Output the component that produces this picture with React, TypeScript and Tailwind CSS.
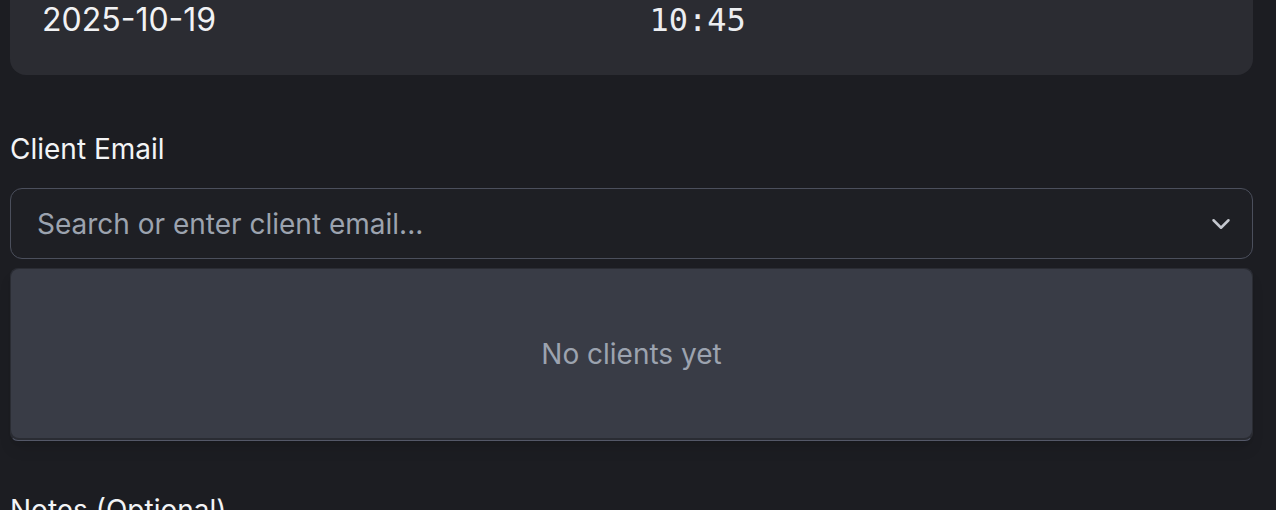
import { ChevronDown } from 'lucide-react';

export default function App() {
  return (
    <div className="min-h-[510px] bg-[#1c1d22] font-['Inter',sans-serif] overflow-hidden">
      <div className="w-[1243px] ml-[10px]">
        <section className="rounded-b-2xl bg-[#2b2c32] pb-[35px]">
          <div className="grid grid-cols-2 gap-9 px-8">
            <div className="text-[32px] leading-[40px] text-[#f1f2f4]">2025-10-19</div>
            <div className="text-[32px] leading-[40px] text-[#eceef1] font-['DejaVu_Sans_Mono',monospace]">
              10:45
            </div>
          </div>
        </section>

        <label className="block mt-[54px] text-[28px] leading-[40px] text-[#f3f4f6]">
          Client Email
        </label>

        <div className="mt-[19px] flex h-[71px] items-center justify-between rounded-xl border border-[#4b4f5c] bg-[#1e1f24] pl-[26px] pr-[16px]">
          <span className="text-[28px] text-[#9ca3af]">Search or enter client email...</span>
          <ChevronDown className="h-[30px] w-[30px] text-[#c4c7ce]" strokeWidth={2} />
        </div>

        <div className="mt-[9px] rounded-lg border border-[#2a2c33] border-b-[#545868] bg-[#2a2c33] shadow-lg">
          <div className="flex h-[169px] items-center justify-center rounded-lg bg-[#393c46] mb-[2px]">
            <span className="text-[28px] text-[#9ca3af]">No clients yet</span>
          </div>
        </div>

        <label className="block mt-[49px] text-[28px] leading-[40px] text-[#f3f4f6]">
          Notes (Optional)
        </label>
      </div>
    </div>
  );
}
